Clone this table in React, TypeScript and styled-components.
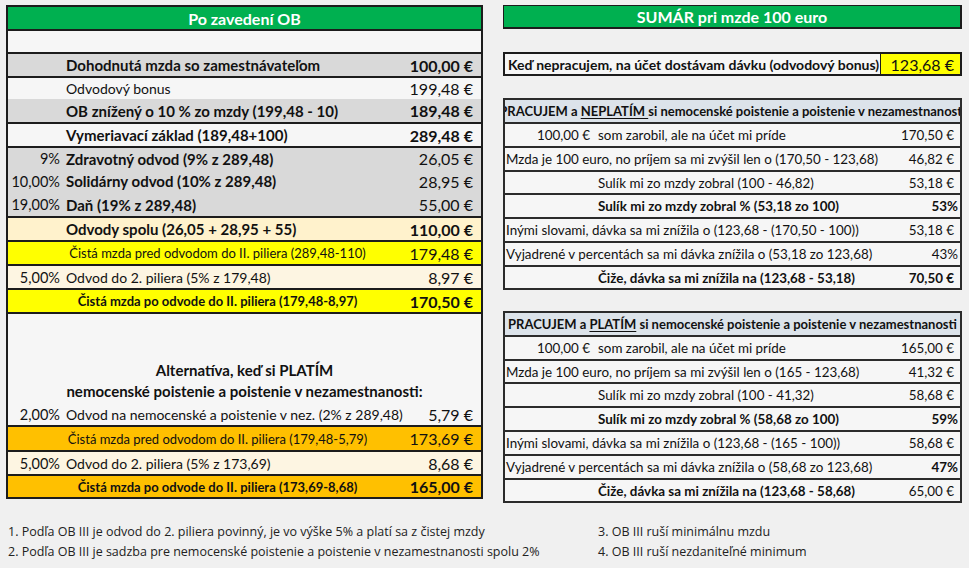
import * as React from "react";
import styled, { createGlobalStyle } from "styled-components";

const GlobalStyle = createGlobalStyle`
  html, body { margin: 0; padding: 0; background: #f0f0f0; }
  body { font-family: Lato, "Open Sans", sans-serif; color: #111; }
`;

const Page = styled.div`
  width: 969px;
  height: 568px;
  overflow: hidden;
  box-sizing: border-box;
  padding: 5px 0 0 6px;
`;

const Columns = styled.div`
  display: flex;
  gap: 20px;
  align-items: flex-start;
`;

const LeftPanel = styled.div`
  width: 477px;
  box-sizing: border-box;
  border: 2px solid #1c1c1c;
  background: #f6f6f6;
`;

const GreenBar = styled.div`
  height: 22px;
  background: #00b050;
  color: #fff;
  font-weight: 700;
  font-size: 16px;
  display: flex;
  align-items: center;
  justify-content: center;
`;

const LRow = styled.div<{ $bg?: string; $h: number; $line?: boolean }>`
  box-sizing: border-box;
  height: ${(p) => p.$h}px;
  background: ${(p) => p.$bg || "#f6f6f6"};
  border-top: ${(p) => (p.$line ? "2px solid #1c1c1c" : "none")};
  display: grid;
  grid-template-columns: 52px minmax(0, 1fr) 106px;
  column-gap: 6px;
  align-items: center;
  white-space: nowrap;
`;

const Pct = styled.span`
  text-align: right;
  font-size: 14.5px;
`;

const Label = styled.span<{ $bold?: boolean; $center?: boolean; $small?: boolean }>`
  font-size: ${(p) => (p.$small ? 13 : p.$bold ? 15 : 14)}px;
  font-weight: ${(p) => (p.$bold ? 700 : 400)};
  text-align: ${(p) => (p.$center ? "center" : "left")};
`;

const Value = styled.span<{ $bold?: boolean }>`
  text-align: right;
  padding-right: 8px;
  font-size: 16px;
  font-weight: ${(p) => (p.$bold ? 700 : 400)};
`;

const AltBlock = styled.div`
  box-sizing: border-box;
  height: 91px;
  border-top: 2px solid #1c1c1c;
  display: flex;
  flex-direction: column;
  justify-content: flex-end;
  align-items: center;
  padding-bottom: 1px;
  font-weight: 700;
  font-size: 15px;
  line-height: 21px;
`;

const RightPanel = styled.div`
  width: 459px;
  display: flex;
  flex-direction: column;
`;

const GreenHead = styled(GreenBar)`
  height: 24px;
  box-sizing: border-box;
  border: 1px solid #1c1c1c;
  border-right-width: 2px;
  border-bottom-width: 2px;
`;

const BonusRow = styled.div`
  margin-top: 23px;
  height: 24px;
  box-sizing: border-box;
  border: 2px solid #1c1c1c;
  display: flex;
  align-items: center;
  background: #f6f6f6;
`;

const BonusText = styled.span`
  flex: 1;
  padding-left: 3px;
  font-weight: 700;
  font-size: 14px;
  white-space: nowrap;
`;

const BonusValue = styled.span`
  width: 80px;
  height: 100%;
  box-sizing: border-box;
  border-left: 1px solid #1c1c1c;
  background: #ffff00;
  display: flex;
  align-items: center;
  justify-content: flex-end;
  padding-right: 6px;
  font-size: 16px;
  white-space: nowrap;
`;

const Table = styled.div<{ $gap: number }>`
  margin-top: ${(p) => p.$gap}px;
  border: 2px solid #2b2b2b;
  background: #f6f6f6;
`;

const THead = styled.div`
  height: 22px;
  background: #dce3ea;
  display: flex;
  justify-content: center;
  align-items: center;
  overflow: hidden;
  white-space: nowrap;
  font-weight: 700;
  font-size: 13px;
  u { text-decoration-thickness: 1px; text-underline-offset: 2px; }
`;

const TRow = styled.div<{ $h: number }>`
  box-sizing: border-box;
  height: ${(p) => p.$h}px;
  border-top: 2px solid #2b2b2b;
  display: grid;
  grid-template-columns: 85px minmax(0, 1fr) 72px;
  column-gap: 8px;
  align-items: center;
  white-space: nowrap;
  font-size: 13.4px;
`;

const TFirst = styled.span`
  text-align: right;
`;

const TLabel = styled.span<{ $bold?: boolean; $wide?: boolean }>`
  font-weight: ${(p) => (p.$bold ? 700 : 400)};
  grid-column: ${(p) => (p.$wide ? "1 / 3" : "2 / 3")};
  padding-left: ${(p) => (p.$wide ? "1px" : "0")};
`;

const TValue = styled.span<{ $bold?: boolean; $pct?: boolean }>`
  grid-column: 3 / 4;
  text-align: right;
  padding-right: ${(p) => (p.$pct ? 2 : 6)}px;
  font-weight: ${(p) => (p.$bold ? 700 : 400)};
`;

const Notes = styled.div`
  margin-top: 21px;
  display: grid;
  grid-template-columns: 590px 1fr;
  row-gap: 4px;
  padding-left: 2px;
  font-family: "Liberation Sans Narrow", "Open Sans", sans-serif;
  font-size: 12.5px;
  color: #222;
  line-height: 16px;
`;

type LItem = {
  h: number;
  line?: boolean;
  bg?: string;
  pct?: string;
  label: string;
  bold?: boolean;
  center?: boolean;
  small?: boolean;
  value: string;
  vbold?: boolean;
};

const GREY = "#d9d9d9";
const CREAM = "#fff2cc";
const LIGHT = "#fdf5e2";
const YELLOW = "#ffff00";
const ORANGE = "#ffc000";

const topRows: LItem[] = [
  { h: 24, line: true, bg: GREY, label: "Dohodnutá mzda so zamestnávateľom", bold: true, value: "100,00 €", vbold: true },
  { h: 23, line: true, label: "Odvodový bonus", value: "199,48 €" },
  { h: 23, bg: GREY, label: "OB znížený o 10 % zo mzdy (199,48 - 10)", bold: true, value: "189,48 €", vbold: true },
  { h: 24, line: true, label: "Vymeriavací základ (189,48+100)", bold: true, value: "289,48 €", vbold: true },
  { h: 23, line: true, bg: GREY, pct: "9%", label: "Zdravotný odvod (9% z 289,48)", bold: true, value: "26,05 €" },
  { h: 24, bg: GREY, pct: "10,00%", label: "Solidárny odvod (10% z 289,48)", bold: true, value: "28,95 €" },
  { h: 23, bg: GREY, pct: "19,00%", label: "Daň (19% z 289,48)", bold: true, value: "55,00 €" },
  { h: 24, line: true, bg: CREAM, label: "Odvody spolu (26,05 + 28,95 + 55)", bold: true, value: "110,00 €", vbold: true },
  { h: 24, line: true, bg: YELLOW, label: "Čistá mzda pred odvodom do II. piliera (289,48-110)", center: true, small: true, value: "179,48 €" },
  { h: 24, line: true, bg: LIGHT, pct: "5,00%", label: "Odvod do 2. piliera (5% z 179,48)", value: "8,97 €" },
  { h: 24, line: true, bg: YELLOW, label: "Čistá mzda po odvode do II. piliera (179,48-8,97)", bold: true, center: true, small: true, value: "170,50 €", vbold: true },
];

const altRows: LItem[] = [
  { h: 22, pct: "2,00%", label: "Odvod na nemocenské a poistenie v nez. (2% z 289,48)", value: "5,79 €" },
  { h: 25, line: true, bg: ORANGE, label: "Čistá mzda pred odvodom do II. piliera (179,48-5,79)", center: true, small: true, value: "173,69 €" },
  { h: 24, line: true, bg: LIGHT, pct: "5,00%", label: "Odvod do 2. piliera (5% z 173,69)", value: "8,68 €" },
  { h: 23, line: true, bg: ORANGE, label: "Čistá mzda po odvode do II. piliera (173,69-8,68)", bold: true, center: true, small: true, value: "165,00 €", vbold: true },
];

type TItem = {
  h: number;
  first?: string;
  label: string;
  bold?: boolean;
  wide?: boolean;
  value: string;
  vbold?: boolean;
  pct?: boolean;
};

const table1: TItem[] = [
  { h: 24, first: "100,00 €", label: "som zarobil, ale na účet mi príde", value: "170,50 €" },
  { h: 24, wide: true, label: "Mzda je 100 euro, no príjem sa mi zvýšil len o (170,50 - 123,68)", value: "46,82 €" },
  { h: 23, label: "Sulík mi zo mzdy zobral (100 - 46,82)", value: "53,18 €" },
  { h: 24, label: "Sulík mi zo mzdy zobral % (53,18 zo 100)", bold: true, value: "53%", vbold: true, pct: true },
  { h: 24, wide: true, label: "Inými slovami, dávka sa mi znížila o (123,68 - (170,50 - 100))", value: "53,18 €" },
  { h: 24, wide: true, label: "Vyjadrené v percentách sa mi dávka znížila o (53,18 zo 123,68)", value: "43%", pct: true },
  { h: 23, label: "Čiže, dávka sa mi znížila na (123,68 - 53,18)", bold: true, value: "70,50 €", vbold: true },
];

const table2: TItem[] = [
  { h: 24, first: "100,00 €", label: "som zarobil, ale na účet mi príde", value: "165,00 €" },
  { h: 23, wide: true, label: "Mzda je 100 euro, no príjem sa mi zvýšil len o (165 - 123,68)", value: "41,32 €" },
  { h: 24, label: "Sulík mi zo mzdy zobral (100 - 41,32)", value: "58,68 €" },
  { h: 24, label: "Sulík mi zo mzdy zobral % (58,68 zo 100)", bold: true, value: "59%", vbold: true, pct: true },
  { h: 24, wide: true, label: "Inými slovami, dávka sa mi znížila o  (123,68 - (165 - 100))", value: "58,68 €" },
  { h: 24, wide: true, label: "Vyjadrené v percentách sa mi dávka znížila o (58,68 zo 123,68)", value: "47%", vbold: true, pct: true },
  { h: 23, label: "Čiže, dávka sa mi znížila na (123,68 - 58,68)", bold: true, value: "65,00 €" },
];

const LeftRow = ({ item }: { item: LItem }) => (
  <LRow $h={item.h} $bg={item.bg} $line={item.line}>
    <Pct>{item.pct || ""}</Pct>
    <Label $bold={item.bold} $center={item.center} $small={item.small}>
      {item.label}
    </Label>
    <Value $bold={item.vbold}>{item.value}</Value>
  </LRow>
);

const TableRows = ({ rows }: { rows: TItem[] }) => (
  <>
    {rows.map((r, i) => (
      <TRow key={i} $h={r.h}>
        {r.first && <TFirst>{r.first}</TFirst>}
        <TLabel $bold={r.bold} $wide={r.wide}>
          {r.label}
        </TLabel>
        <TValue $bold={r.vbold} $pct={r.pct}>
          {r.value}
        </TValue>
      </TRow>
    ))}
  </>
);

export default function App() {
  return (
    <Page>
      <GlobalStyle />
      <Columns>
        <LeftPanel>
          <GreenBar>Po zavedení OB</GreenBar>
          <LRow $h={23} $line>
            <span />
          </LRow>
          {topRows.map((r, i) => (
            <LeftRow key={i} item={r} />
          ))}
          <AltBlock>
            <span>Alternatíva, keď si PLATÍM</span>
            <span>nemocenské poistenie a poistenie v nezamestnanosti:</span>
          </AltBlock>
          {altRows.map((r, i) => (
            <LeftRow key={i} item={r} />
          ))}
        </LeftPanel>

        <RightPanel>
          <GreenHead>SUMÁR pri mzde 100 euro</GreenHead>
          <BonusRow>
            <BonusText>Keď nepracujem, na účet dostávam dávku (odvodový bonus)</BonusText>
            <BonusValue>123,68 €</BonusValue>
          </BonusRow>
          <Table $gap={22}>
            <THead>
              <span>
                PRACUJEM a <u>NEPLATÍM </u>si nemocenské poistenie a poistenie v nezamestnanosti
              </span>
            </THead>
            <TableRows rows={table1} />
          </Table>
          <Table $gap={21}>
            <THead>
              <span>
                PRACUJEM a <u>PLATÍM</u> si nemocenské poistenie a poistenie v nezamestnanosti
              </span>
            </THead>
            <TableRows rows={table2} />
          </Table>
        </RightPanel>
      </Columns>
      <Notes>
        <span>1. Podľa OB III je odvod do 2. piliera povinný, je vo výške 5% a platí sa z čistej mzdy</span>
        <span>3. OB III ruší minimálnu mzdu</span>
        <span>2. Podľa OB III je sadzba pre nemocenské poistenie a poistenie v nezamestnanosti spolu 2%</span>
        <span>4. OB III ruší nezdaniteľné minimum</span>
      </Notes>
    </Page>
  );
}
